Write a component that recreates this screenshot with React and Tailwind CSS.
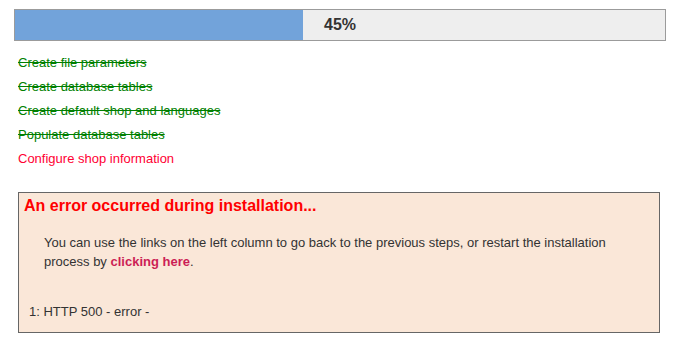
const steps = [
  { label: "Create file parameters", done: true },
  { label: "Create database tables", done: true },
  { label: "Create default shop and languages", done: true },
  { label: "Populate database tables", done: true },
  { label: "Configure shop information", done: false },
];

const App = () => {
  return (
    <div className="w-[675px] h-[340px] bg-white font-['Liberation_Sans',Arial,sans-serif] pt-[9px]">
      <div className="ml-[14px] w-[652px] h-[32px] border border-[#9b9b9b] bg-[#eeeeee] flex items-center">
        <div className="w-[288px] h-full bg-[#72a3da]" />
        <span className="ml-[21px] text-[16px] font-bold text-[#333333]">45%</span>
      </div>

      <ul className="mt-[10px] ml-[18px] flex flex-col">
        {steps.map((step) => (
          <li
            key={step.label}
            className={`h-[24px] leading-[24px] text-[13px] ${
              step.done ? "text-[#008000] line-through" : "text-[#ff0033]"
            }`}
          >
            {step.label}
          </li>
        ))}
      </ul>

      <div className="mt-[21px] ml-[18px] w-[642px] h-[141px] border border-[#666666] bg-[#fae7d8] px-[5px] pt-[2px]">
        <h2 className="text-[16px] font-bold text-[#ff0000] leading-[22px]">
          An error occurred during installation...
        </h2>
        <p className="mt-[16px] ml-[20px] w-[585px] text-[13px] leading-[19px] text-[#333333]">
          You can use the links on the left column to go back to the previous steps, or restart the installation
          process by <a className="font-bold text-[#cc1e55]">clicking here</a>.
        </p>
        <p className="mt-[31px] ml-[5px] text-[13px] text-[#333333]">1: HTTP 500 - error -</p>
      </div>
    </div>
  );
};

export default App;
